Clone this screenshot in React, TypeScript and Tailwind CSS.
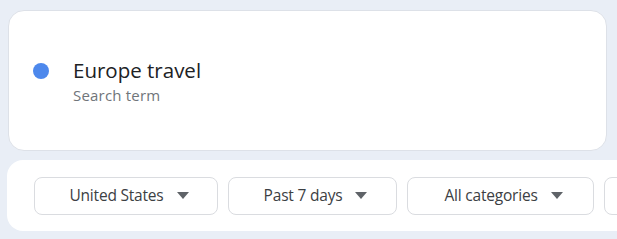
const filters = [
  { label: 'United States', width: 'w-[184px]' },
  { label: 'Past 7 days', width: 'w-[169px]' },
  { label: 'All categories', width: 'w-[187px]' },
]

function Caret() {
  return (
    <svg width="12" height="7" viewBox="0 0 12 7" className="shrink-0">
      <path d="M0 0 L12 0 L6 7 Z" fill="#5f6368" />
    </svg>
  )
}

export default function App() {
  return (
    <div
      className="w-[617px] h-[239px] overflow-hidden bg-[#e9eef6] pl-2 pt-[10px]"
      style={{ fontFamily: '"Open Sans", Roboto, sans-serif' }}
    >
      <div className="w-[599px] h-[141px] rounded-2xl bg-white border border-[#dde1e8] flex items-center pl-[24px]">
        <div className="flex items-start">
          <span className="w-4 h-4 rounded-full bg-[#4d88ec] shrink-0 mt-[6px]" />
          <div className="ml-[24px]">
            <p className="text-[20.5px] leading-[26px] text-[#202124]">Europe travel</p>
            <p className="text-[15px] leading-[20px] text-[#70757a] mt-[2px] tracking-[0.2px]">Search term</p>
          </div>
        </div>
      </div>

      <div className="mt-[9px] -ml-px w-[700px] h-[71px] rounded-2xl bg-white flex items-center gap-[10px] pl-[27px]">
        {filters.map((f) => (
          <div
            key={f.label}
            className={`${f.width} h-[38px] shrink-0 rounded-lg border border-[#dadce0] flex items-center justify-center gap-[13px] pl-[6px]`}
          >
            <span className="text-[15.5px] text-[#3c4043] tracking-[-0.2px]">{f.label}</span>
            <Caret />
          </div>
        ))}
        <div className="w-[170px] h-[38px] shrink-0 rounded-lg border border-[#dadce0]" />
      </div>
    </div>
  )
}
